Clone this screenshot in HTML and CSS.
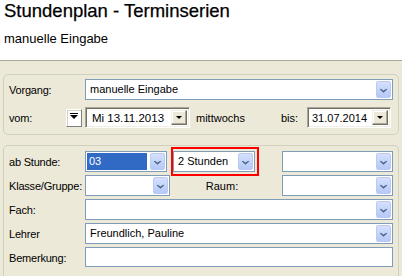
FILE: index.html
```html
<!DOCTYPE html>
<html lang="de">
<head>
  <meta charset="UTF-8">
  <title>Stundenplan - Terminserien</title>
  <link rel="stylesheet" href="styles.css">
</head>
<body>
  <div class="header">
    <h1>Stundenplan - Terminserien</h1>
    <p class="subtitle">manuelle Eingabe</p>
  </div>

  <div class="content">
    <div class="group group-top">
      <div class="row">
        <span class="label">Vorgang:</span>
        <div class="combo combo-full"><span class="value">manuelle Eingabe</span><span class="drop"></span></div>
      </div>
      <div class="row">
        <span class="label label-vom">vom:</span>
        <span class="spin"><span class="spin-bar"></span></span>
        <div class="date date-from"><span class="value">Mi 13.11.2013</span><span class="date-btn"></span></div>
        <span class="weekday">mittwochs</span>
        <span class="label-bis">bis:</span>
        <div class="date date-to"><span class="value">31.07.2014</span><span class="date-btn"></span></div>
      </div>
    </div>

    <div class="group group-bottom">
      <div class="row">
        <span class="label">ab Stunde:</span>
        <div class="combo combo-hour"><span class="value selected">03</span><span class="drop"></span></div>
        <div class="highlight">
          <div class="combo combo-dur"><span class="value">2 Stunden</span><span class="drop"></span></div>
        </div>
        <div class="combo combo-right"><span class="value"></span><span class="drop"></span></div>
      </div>
      <div class="row">
        <span class="label">Klasse/Gruppe:</span>
        <div class="combo combo-class"><span class="value"></span><span class="drop"></span></div>
        <span class="label-raum">Raum:</span>
        <div class="combo combo-right"><span class="value"></span><span class="drop"></span></div>
      </div>
      <div class="row">
        <span class="label">Fach:</span>
        <div class="combo combo-full"><span class="value"></span><span class="drop"></span></div>
      </div>
      <div class="row">
        <span class="label">Lehrer</span>
        <div class="combo combo-full"><span class="value">Freundlich, Pauline</span><span class="drop"></span></div>
      </div>
      <div class="row">
        <span class="label">Bemerkung:</span>
        <div class="text-input"></div>
      </div>
    </div>
  </div>
</body>
</html>
```

FILE: styles.css
```css
body {
  margin: 0;
  width: 402px;
  height: 276px;
  overflow: hidden;
  background-color: #ece9d8;
  font-family: 'Liberation Sans', Arial, sans-serif;
  font-size: 11px;
  color: #000;
}
.header {
  background-color: #fff;
  height: 61px;
  border-bottom: 1px solid #aca899;
  padding-left: 4px;
  box-sizing: border-box;
}
h1 {
  margin: 0;
  padding-top: 0;
  font-size: 18.5px;
  font-weight: normal;
  line-height: 22px;
  -webkit-text-stroke: 0.25px #000;
}
.subtitle {
  margin: 9px 0 0 0;
  font-size: 13px;
  line-height: 15px;
}
.content {
  padding: 13px 3px 0 3px;
}
.group {
  border: 1px solid #d0d0bf;
  border-radius: 5px;
  padding: 4px 5px 0 5px;
  box-sizing: border-box;
}
.group-top {
  height: 61px;
}
.group-bottom {
  margin-top: 10px;
  padding-top: 5px;
  height: 131px;
  border-bottom: none;
  border-radius: 5px 5px 0 0;
}
.row {
  display: flex;
  align-items: center;
  height: 21px;
  margin-bottom: 3px;
}
.group-top .row {
  margin-bottom: 7px;
}
.label {
  width: 76px;
  flex-shrink: 0;
  white-space: nowrap;
  letter-spacing: -0.2px;
}
.label-vom {
  width: 57px;
}
.combo {
  box-sizing: border-box;
  height: 21px;
  border: 1px solid #7f9db9;
  background-color: #fff;
  display: flex;
  align-items: center;
  padding: 1px;
}
.combo .value {
  flex: 1;
  padding-left: 3px;
  line-height: 17px;
  height: 17px;
  white-space: nowrap;
}
.combo .value.selected {
  background-color: #316ac5;
  color: #fff;
  margin-right: 3px;
  padding-left: 2px;
}
.drop {
  width: 15px;
  height: 17px;
  box-sizing: border-box;
  border: 1px solid #b9cbf3;
  border-radius: 2px;
  background: linear-gradient(#d4e0fd, #b5c9f7);
  position: relative;
}
.drop::after {
  content: "";
  position: absolute;
  left: 3px;
  top: 4px;
  width: 5px;
  height: 5px;
  border-right: 2px solid #4d6185;
  border-bottom: 2px solid #4d6185;
  transform: scale(0.75, 0.6) rotate(45deg);
}
.combo-full {
  width: 308px;
}
.combo-hour {
  width: 82px;
}
.highlight {
  margin-left: 4px;
  border: 2px solid #f00;
  padding: 2px 2px 2px 0;
  margin-top: -1px;
}
.combo-dur {
  width: 82px;
}
.combo-right {
  width: 111px;
  margin-left: auto;
}
.combo-class {
  width: 85px;
}
.label-raum {
  margin-left: auto;
  margin-right: 8px;
}
.spin {
  width: 16px;
  height: 18px;
  box-sizing: border-box;
  background-color: #fff;
  border: 1px solid;
  border-color: #fff #808080 #808080 #fff;
  box-shadow: inset 1px 1px 0 #d4d0c8;
  position: relative;
  margin-right: 3px;
}
.spin-bar {
  position: absolute;
  left: 3px;
  top: 3px;
  width: 8px;
  height: 1px;
  background-color: #000;
}
.spin::after {
  content: "";
  position: absolute;
  left: 3px;
  top: 5px;
  border-left: 4px solid transparent;
  border-right: 4px solid transparent;
  border-top: 4px solid #000;
}
.date {
  box-sizing: border-box;
  height: 21px;
  background-color: #fff;
  border: 1px solid;
  border-color: #aca899 #fff #fff #aca899;
  box-shadow: inset 1px 1px 0 #716f64, inset -1px -1px 0 #f1efe2;
  display: flex;
  align-items: center;
  padding: 2px 2px 2px 3px;
}
.date .value {
  flex: 1;
  font-size: 11.5px;
  padding-left: 3px;
  white-space: nowrap;
}
.date-to .value {
  padding-left: 1px;
  font-size: 11px;
}
.date-btn {
  width: 16px;
  height: 15px;
  box-sizing: border-box;
  background-color: #ece9d8;
  border: 1px solid;
  border-color: #f1efe2 #716f64 #716f64 #f1efe2;
  box-shadow: inset -1px -1px 0 #aca899, inset 1px 1px 0 #fff;
  position: relative;
}
.date-btn::after {
  content: "";
  position: absolute;
  left: 4px;
  top: 5px;
  border-left: 3px solid transparent;
  border-right: 3px solid transparent;
  border-top: 3px solid #000;
}
.date-from {
  width: 105px;
}
.weekday {
  margin-left: 6px;
}
.label-bis {
  margin-left: auto;
  margin-right: 9px;
}
.date-to {
  width: 84px;
  margin-right: 2px;
}
.text-input {
  box-sizing: border-box;
  width: 308px;
  height: 20px;
  border: 1px solid #7f9db9;
  background-color: #fff;
  margin-top: -2px;
}
```
